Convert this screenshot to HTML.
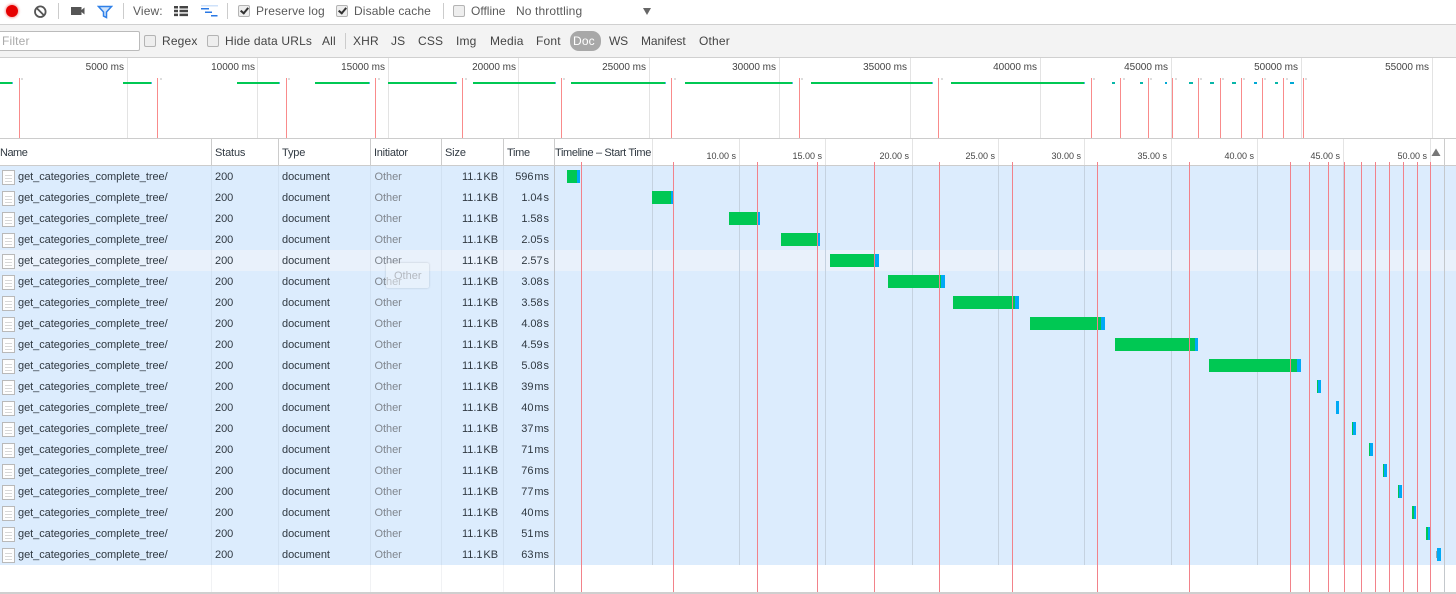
<!DOCTYPE html>
<html><head><meta charset="utf-8"><title>Network</title>
<style>
html,body{margin:0;padding:0;background:#fff;width:1456px;height:594px;overflow:hidden}
body{position:relative;font:11px/21px "Liberation Sans",sans-serif;color:#303942}
div,span,svg{position:absolute}
.t{white-space:nowrap;font-size:12px;letter-spacing:.12px;line-height:14px;color:#5a5a5a}
.f{white-space:nowrap;font-size:12px;letter-spacing:.17px;line-height:14px;color:#444;top:34px}
.sep{width:1px;background:#ccc}
.cb{width:10px;height:10px;background:#eee;border:1px solid #b4b4b4;border-radius:2px}
.ck::after{content:"";position:absolute;left:2.5px;top:.3px;width:3px;height:6px;border:solid #333;border-width:0 2px 2px 0;transform:rotate(40deg)}
.ol{top:78px;width:1px;height:60px;background:#f98b8b}
.og{top:58px;width:1px;height:80px;background:#e3e3e3}
.ot{top:78px;width:2px;height:2px;background:#ddd}
.ob{top:82px;height:2px;background:#00c853}
.ob::after{content:"";position:absolute;right:0;top:0;width:1px;height:2px;background:#4fb8ea}
.ob2{top:82px;height:2px;background:#08b6a8}
.ol2{white-space:nowrap;top:61px;line-height:14px;font-size:10px;letter-spacing:0;color:#444;text-align:right;width:80px}
.h{white-space:nowrap;top:146px;line-height:14px;font-size:11px;color:#303942;letter-spacing:-.15px}
.hg{top:139px;width:1px;height:26px;background:#e4e4e4}
.hl{white-space:nowrap;top:149px;line-height:14px;font-size:9px;letter-spacing:0;color:#444;text-align:right;width:60px}
.r{left:0;width:1456px;height:21px;background:#dcecfd}
.r span{white-space:nowrap;top:1px;line-height:21px;letter-spacing:-.05px}
.n{left:18px}.s{left:215px}.y{left:282px}.o{left:374.5px;color:#80868e}
.z{right:958px;word-spacing:-2px}.m{right:907px;word-spacing:-2px}
.ic{left:2px;top:4px;width:11px;height:14px;background:#fff repeating-linear-gradient(#fff 0 2px,#d8d8d8 2px 3px) 2px 2px/7px 10px no-repeat;background-color:#fdfdfd;border:1px solid #b9b9b9;box-sizing:content-box;height:13px}
.cl{top:166px;width:1px;height:426px;background:rgba(120,130,150,.10)}
.gl{top:166px;width:1px;height:399px;background:#c5d2e0}
.rl{top:162px;width:1px;height:430px;background:#f2828a}
.g{height:13px;background:#00c853}
.b{height:13px;background:#00a9f5}
</style></head>
<body>
<!-- toolbar -->
<div style="left:0;top:24px;width:1456px;height:1px;background:#d0d0d0"></div>
<div style="left:6px;top:5px;width:12px;height:12px;border-radius:50%;background:#e60000;box-shadow:0 0 2px 1px rgba(230,0,0,.35)"></div>
<svg style="left:33px;top:4px" width="15" height="15" viewBox="0 0 15 15"><circle cx="7.3" cy="7.7" r="5.3" fill="none" stroke="#555" stroke-width="1.8"/><path d="M3.6 4L11 11.4" stroke="#555" stroke-width="1.8"/></svg>
<div class="sep" style="left:58px;top:3px;height:16px"></div>
<svg style="left:70px;top:5px" width="16" height="12" viewBox="0 0 16 12"><rect x="1" y="2" width="10.5" height="8" fill="#555"/><path d="M11.5 5L14.5 2.5V9.5L11.5 7Z" fill="#555"/></svg>
<svg style="left:97px;top:5px" width="16" height="14" viewBox="0 0 16 14"><path d="M1.5 1.5H14.5L9.5 7V12.5L6.5 11V7Z" fill="#cfe3fb" stroke="#2f80e8" stroke-width="1.5"/></svg>
<div class="sep" style="left:123px;top:3px;height:16px"></div>
<div class="t" style="left:133px;top:4px">View:</div>
<svg style="left:173px;top:5px" width="16" height="12" viewBox="0 0 16 12"><path d="M1 1h4v2.5H1zM1 4.8h4v2.5H1zM1 8.6h4v2.5H1zM6.5 1H15v2.5H6.5zM6.5 4.8H15v2.5H6.5zM6.5 8.6H15v2.5H6.5z" fill="#444"/></svg>
<svg style="left:200px;top:5px" width="19" height="13" viewBox="0 0 19 13"><path d="M1 0h17v1.5H1z" fill="#cfe2fa"/><path d="M1 3h8v1.5H1zM5 6.5h7V8H5zM11 10h6.500v1.500H11z" fill="#2a78e4"/></svg>
<div class="sep" style="left:227px;top:3px;height:16px"></div>
<div class="cb ck" style="left:238px;top:5px"></div><div class="t" style="left:256px;top:4px">Preserve log</div>
<div class="cb ck" style="left:336px;top:5px"></div><div class="t" style="left:354px;top:4px">Disable cache</div>
<div class="sep" style="left:443px;top:3px;height:16px"></div>
<div class="cb" style="left:453px;top:5px"></div><div class="t" style="left:471px;top:4px;letter-spacing:0">Offline</div>
<div class="t" style="left:516px;top:4px">No throttling</div>
<svg style="left:642px;top:7px" width="10" height="9" viewBox="0 0 10 9"><path d="M1 1H9L5 8Z" fill="#666"/></svg>
<!-- filter bar -->
<div style="left:0;top:25px;width:1456px;height:32px;background:#f3f3f3"></div>
<div style="left:0;top:57px;width:1456px;height:1px;background:#d0d0d0"></div>
<div style="left:-2px;top:31px;width:140px;height:18px;background:#fff;border:1px solid #bbb;border-radius:2px"></div>
<div class="f" style="left:2px;color:#aaa">Filter</div>
<div class="cb" style="left:144px;top:35px"></div><div class="f" style="left:162px">Regex</div>
<div class="cb" style="left:207px;top:35px"></div><div class="f" style="left:225px">Hide data URLs</div>
<div class="f" style="left:322px">All</div>
<div class="sep" style="left:345px;top:33px;height:16px"></div>
<div class="f" style="left:353px">XHR</div>
<div class="f" style="left:391px">JS</div>
<div class="f" style="left:418px">CSS</div>
<div class="f" style="left:456px">Img</div>
<div class="f" style="left:490px">Media</div>
<div class="f" style="left:536px">Font</div>
<div style="left:570px;top:31px;width:31px;height:20px;border-radius:9px;background:#a8a8a8"></div>
<div class="f" style="left:573px;color:#fff">Doc</div>
<div class="f" style="left:609px;letter-spacing:-.2px">WS</div>
<div class="f" style="left:641px;letter-spacing:-.1px">Manifest</div>
<div class="f" style="left:699px">Other</div>
<!-- overview -->
<div class="og" style="left:127px"></div><div class="og" style="left:257px"></div><div class="og" style="left:388px"></div><div class="og" style="left:518px"></div><div class="og" style="left:649px"></div><div class="og" style="left:779px"></div><div class="og" style="left:910px"></div><div class="og" style="left:1040px"></div><div class="og" style="left:1171px"></div><div class="og" style="left:1301px"></div><div class="og" style="left:1432px"></div>
<div class="ol2" style="left:44px">5000 ms</div><div class="ol2" style="left:175px">10000 ms</div><div class="ol2" style="left:305px">15000 ms</div><div class="ol2" style="left:436px">20000 ms</div><div class="ol2" style="left:566px">25000 ms</div><div class="ol2" style="left:696px">30000 ms</div><div class="ol2" style="left:827px">35000 ms</div><div class="ol2" style="left:957px">40000 ms</div><div class="ol2" style="left:1088px">45000 ms</div><div class="ol2" style="left:1218px">50000 ms</div><div class="ol2" style="left:1349px">55000 ms</div>
<div class="ob" style="left:0;width:13px"></div><div class="ob" style="left:123px;width:29px"></div><div class="ob" style="left:237px;width:43px"></div><div class="ob" style="left:315px;width:55px"></div><div class="ob" style="left:388px;width:69px"></div><div class="ob" style="left:473px;width:83px"></div><div class="ob" style="left:571px;width:95px"></div><div class="ob" style="left:685px;width:108px"></div><div class="ob" style="left:811px;width:122px"></div><div class="ob" style="left:951px;width:134px"></div>
<div class="ob2" style="left:1112px;width:3px"></div><div class="ob2" style="left:1140px;width:3px"></div><div class="ob2" style="left:1165px;width:2px;background:#00a9d5"></div><div class="ob2" style="left:1189px;width:4px"></div><div class="ob2" style="left:1210px;width:4px"></div><div class="ob2" style="left:1232px;width:4px"></div><div class="ob2" style="left:1254px;width:3px;background:#00a9d5"></div><div class="ob2" style="left:1275px;width:3px"></div><div class="ob2" style="left:1290px;width:4px;background:#00a9d5"></div>
<div class="ol" style="left:19px"></div><div class="ol" style="left:157px"></div><div class="ol" style="left:286px"></div><div class="ol" style="left:375px"></div><div class="ol" style="left:462px"></div><div class="ol" style="left:561px"></div><div class="ol" style="left:671px"></div><div class="ol" style="left:799px"></div><div class="ol" style="left:938px"></div><div class="ol" style="left:1091px"></div><div class="ol" style="left:1120px"></div><div class="ol" style="left:1148px"></div><div class="ol" style="left:1172px"></div><div class="ol" style="left:1198px"></div><div class="ol" style="left:1220px"></div><div class="ol" style="left:1241px"></div><div class="ol" style="left:1262px"></div><div class="ol" style="left:1283px"></div><div class="ol" style="left:1303px"></div>
<div class="ot" style="left:21px"></div><div class="ot" style="left:160px"></div><div class="ot" style="left:288px"></div><div class="ot" style="left:378px"></div><div class="ot" style="left:465px"></div><div class="ot" style="left:563px"></div><div class="ot" style="left:674px"></div><div class="ot" style="left:801px"></div><div class="ot" style="left:941px"></div><div class="ot" style="left:1093px"></div><div class="ot" style="left:1123px"></div><div class="ot" style="left:1150px"></div><div class="ot" style="left:1175px"></div><div class="ot" style="left:1200px"></div><div class="ot" style="left:1222px"></div><div class="ot" style="left:1243px"></div><div class="ot" style="left:1264px"></div><div class="ot" style="left:1286px"></div><div class="ot" style="left:1305px"></div>
<div style="left:0;top:138px;width:1456px;height:1px;background:#ccc"></div>
<!-- header -->
<div class="hg" style="left:211px;background:#ccc"></div><div class="hg" style="left:278px;background:#ccc"></div><div class="hg" style="left:370px;background:#ccc"></div><div class="hg" style="left:441px;background:#ccc"></div><div class="hg" style="left:503px;background:#ccc"></div><div class="hg" style="left:554px;background:#ccc"></div>
<div class="hg" style="left:652px"></div><div class="hg" style="left:739px"></div><div class="hg" style="left:825px"></div><div class="hg" style="left:912px"></div><div class="hg" style="left:998px"></div><div class="hg" style="left:1084px"></div><div class="hg" style="left:1171px"></div><div class="hg" style="left:1257px"></div><div class="hg" style="left:1343px"></div><div class="hg" style="left:1430px"></div><div class="hg" style="left:1444px;background:#ccc"></div>
<div class="h" style="left:0;letter-spacing:-.5px">Name</div><div class="h" style="left:215px">Status</div><div class="h" style="left:282px">Type</div><div class="h" style="left:374px;letter-spacing:-.25px">Initiator</div><div class="h" style="left:445px">Size</div><div class="h" style="left:507px;letter-spacing:-.3px">Time</div><div class="h" style="left:555px;letter-spacing:-.36px">Timeline – Start Time</div>
<div class="hl" style="left:676px">10.00 s</div><div class="hl" style="left:762px">15.00 s</div><div class="hl" style="left:849px">20.00 s</div><div class="hl" style="left:935px">25.00 s</div><div class="hl" style="left:1021px">30.00 s</div><div class="hl" style="left:1107px">35.00 s</div><div class="hl" style="left:1194px">40.00 s</div><div class="hl" style="left:1280px">45.00 s</div><div class="hl" style="left:1367px">50.00 s</div>
<svg style="left:1431px;top:148px" width="10" height="9" viewBox="0 0 10 9"><path d="M5 .5L9.500 8H.5Z" fill="#777"/></svg>
<div style="left:0;top:165px;width:1456px;height:1px;background:#ccc"></div>
<!-- rows -->
<div class="r" style="top:166px"><div class="ic"></div><span class="n">get_categories_complete_tree/</span><span class="s">200</span><span class="y">document</span><span class="o">Other</span><span class="z">11.1 KB</span><span class="m">596 ms</span></div>
<div class="r" style="top:187px"><div class="ic"></div><span class="n">get_categories_complete_tree/</span><span class="s">200</span><span class="y">document</span><span class="o">Other</span><span class="z">11.1 KB</span><span class="m">1.04 s</span></div>
<div class="r" style="top:208px"><div class="ic"></div><span class="n">get_categories_complete_tree/</span><span class="s">200</span><span class="y">document</span><span class="o">Other</span><span class="z">11.1 KB</span><span class="m">1.58 s</span></div>
<div class="r" style="top:229px"><div class="ic"></div><span class="n">get_categories_complete_tree/</span><span class="s">200</span><span class="y">document</span><span class="o">Other</span><span class="z">11.1 KB</span><span class="m">2.05 s</span></div>
<div class="r" style="top:250px;background:#e9f1fb"><div class="ic"></div><span class="n">get_categories_complete_tree/</span><span class="s">200</span><span class="y">document</span><span class="o">Other</span><span class="z">11.1 KB</span><span class="m">2.57 s</span></div>
<div class="r" style="top:271px"><div class="ic"></div><span class="n">get_categories_complete_tree/</span><span class="s">200</span><span class="y">document</span><span class="o">Other</span><span class="z">11.1 KB</span><span class="m">3.08 s</span></div>
<div class="r" style="top:292px"><div class="ic"></div><span class="n">get_categories_complete_tree/</span><span class="s">200</span><span class="y">document</span><span class="o">Other</span><span class="z">11.1 KB</span><span class="m">3.58 s</span></div>
<div class="r" style="top:313px"><div class="ic"></div><span class="n">get_categories_complete_tree/</span><span class="s">200</span><span class="y">document</span><span class="o">Other</span><span class="z">11.1 KB</span><span class="m">4.08 s</span></div>
<div class="r" style="top:334px"><div class="ic"></div><span class="n">get_categories_complete_tree/</span><span class="s">200</span><span class="y">document</span><span class="o">Other</span><span class="z">11.1 KB</span><span class="m">4.59 s</span></div>
<div class="r" style="top:355px"><div class="ic"></div><span class="n">get_categories_complete_tree/</span><span class="s">200</span><span class="y">document</span><span class="o">Other</span><span class="z">11.1 KB</span><span class="m">5.08 s</span></div>
<div class="r" style="top:376px"><div class="ic"></div><span class="n">get_categories_complete_tree/</span><span class="s">200</span><span class="y">document</span><span class="o">Other</span><span class="z">11.1 KB</span><span class="m">39 ms</span></div>
<div class="r" style="top:397px"><div class="ic"></div><span class="n">get_categories_complete_tree/</span><span class="s">200</span><span class="y">document</span><span class="o">Other</span><span class="z">11.1 KB</span><span class="m">40 ms</span></div>
<div class="r" style="top:418px"><div class="ic"></div><span class="n">get_categories_complete_tree/</span><span class="s">200</span><span class="y">document</span><span class="o">Other</span><span class="z">11.1 KB</span><span class="m">37 ms</span></div>
<div class="r" style="top:439px"><div class="ic"></div><span class="n">get_categories_complete_tree/</span><span class="s">200</span><span class="y">document</span><span class="o">Other</span><span class="z">11.1 KB</span><span class="m">71 ms</span></div>
<div class="r" style="top:460px"><div class="ic"></div><span class="n">get_categories_complete_tree/</span><span class="s">200</span><span class="y">document</span><span class="o">Other</span><span class="z">11.1 KB</span><span class="m">76 ms</span></div>
<div class="r" style="top:481px"><div class="ic"></div><span class="n">get_categories_complete_tree/</span><span class="s">200</span><span class="y">document</span><span class="o">Other</span><span class="z">11.1 KB</span><span class="m">77 ms</span></div>
<div class="r" style="top:502px"><div class="ic"></div><span class="n">get_categories_complete_tree/</span><span class="s">200</span><span class="y">document</span><span class="o">Other</span><span class="z">11.1 KB</span><span class="m">40 ms</span></div>
<div class="r" style="top:523px"><div class="ic"></div><span class="n">get_categories_complete_tree/</span><span class="s">200</span><span class="y">document</span><span class="o">Other</span><span class="z">11.1 KB</span><span class="m">51 ms</span></div>
<div class="r" style="top:544px"><div class="ic"></div><span class="n">get_categories_complete_tree/</span><span class="s">200</span><span class="y">document</span><span class="o">Other</span><span class="z">11.1 KB</span><span class="m">63 ms</span></div>
<!-- column lines -->
<div class="cl" style="left:211px"></div><div class="cl" style="left:278px"></div><div class="cl" style="left:370px"></div><div class="cl" style="left:441px"></div><div class="cl" style="left:503px"></div>
<div class="cl" style="left:554px;background:#bfc4ca"></div>
<div class="gl" style="left:652px"></div><div class="gl" style="left:739px"></div><div class="gl" style="left:825px"></div><div class="gl" style="left:912px"></div><div class="gl" style="left:998px"></div><div class="gl" style="left:1084px"></div><div class="gl" style="left:1171px"></div><div class="gl" style="left:1257px"></div><div class="gl" style="left:1343px"></div><div class="cl" style="left:1444px;background:#c4c8cc"></div>
<!-- bars -->
<div class="g" style="left:567px;top:170px;width:10px"></div><div class="b" style="left:577px;top:170px;width:3px"></div>
<div class="g" style="left:652px;top:191px;width:19px"></div><div class="b" style="left:671px;top:191px;width:3px"></div>
<div class="g" style="left:729px;top:212px;width:28px"></div><div class="b" style="left:757px;top:212px;width:3px"></div>
<div class="g" style="left:781px;top:233px;width:36px"></div><div class="b" style="left:817px;top:233px;width:3px"></div>
<div class="g" style="left:830px;top:254px;width:45px"></div><div class="b" style="left:875px;top:254px;width:4px"></div>
<div class="g" style="left:888px;top:275px;width:53px"></div><div class="b" style="left:941px;top:275px;width:4px"></div>
<div class="g" style="left:953px;top:296px;width:62px"></div><div class="b" style="left:1015px;top:296px;width:4px"></div>
<div class="g" style="left:1030px;top:317px;width:71px"></div><div class="b" style="left:1101px;top:317px;width:4px"></div>
<div class="g" style="left:1115px;top:338px;width:80px"></div><div class="b" style="left:1195px;top:338px;width:3px"></div>
<div class="g" style="left:1209px;top:359px;width:88px"></div><div class="b" style="left:1297px;top:359px;width:4px"></div>
<div class="g" style="left:1317px;top:380px;width:1px"></div><div class="b" style="left:1318px;top:380px;width:3px"></div>
<div class="b" style="left:1336px;top:401px;width:3px"></div>
<div class="g" style="left:1352px;top:422px;width:1px"></div><div class="b" style="left:1353px;top:422px;width:3px"></div>
<div class="g" style="left:1369px;top:443px;width:1px"></div><div class="b" style="left:1370px;top:443px;width:3px"></div>
<div class="g" style="left:1383px;top:464px;width:1px"></div><div class="b" style="left:1384px;top:464px;width:3px"></div>
<div class="g" style="left:1398px;top:485px;width:1px"></div><div class="b" style="left:1399px;top:485px;width:3px"></div>
<div class="g" style="left:1412px;top:506px;width:2px"></div><div class="b" style="left:1414px;top:506px;width:2px"></div>
<div class="g" style="left:1426px;top:527px;width:2px"></div><div class="b" style="left:1428px;top:527px;width:2px"></div>
<div style="left:1436px;top:551px;width:1px;height:7px;background:#9aa8a8"></div><div class="b" style="left:1437px;top:548px;width:4px"></div>
<!-- red lines -->
<div class="rl" style="left:581px"></div><div class="rl" style="left:673px"></div><div class="rl" style="left:757px"></div><div class="rl" style="left:817px"></div><div class="rl" style="left:874px"></div><div class="rl" style="left:939px"></div><div class="rl" style="left:1012px"></div><div class="rl" style="left:1097px"></div><div class="rl" style="left:1189px"></div><div class="rl" style="left:1290px"></div><div class="rl" style="left:1309px"></div><div class="rl" style="left:1328px"></div><div class="rl" style="left:1344px"></div><div class="rl" style="left:1361px"></div><div class="rl" style="left:1375px"></div><div class="rl" style="left:1389px"></div><div class="rl" style="left:1403px"></div><div class="rl" style="left:1417px"></div><div class="rl" style="left:1430px"></div>
<!-- bottom -->
<div style="left:0;top:592px;width:1456px;height:2px;background:#cfcfcf"></div>
<!-- tooltip -->
<div style="left:386px;top:263px;width:43px;height:25px;background:rgba(240,245,252,.55);border-radius:2px;box-shadow:0 0 2px rgba(0,0,0,.18)"></div>
<div style="left:394px;top:266px;line-height:21px;color:#b4b9c0;white-space:nowrap">Other</div>
</body></html>
